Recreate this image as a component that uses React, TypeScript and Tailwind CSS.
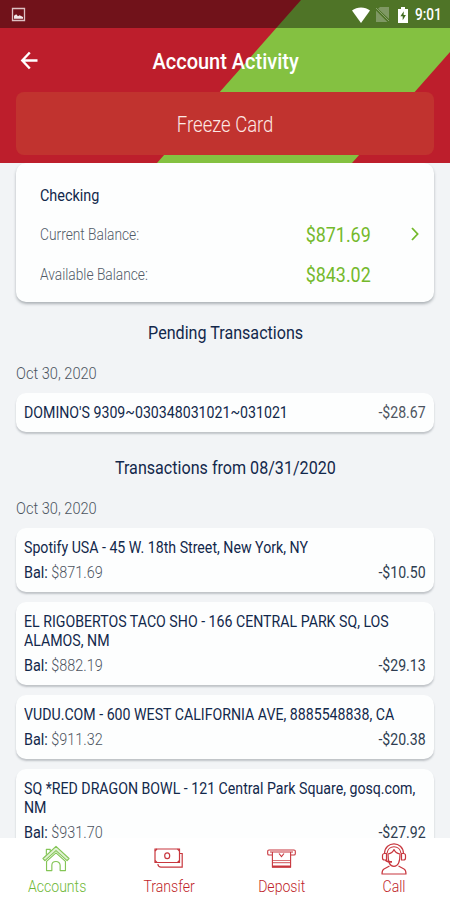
import type { ReactNode } from "react";

type Transaction = {
  description: string;
  amount: string;
  balance: string;
};

const TRANSACTIONS: Transaction[] = [
  { description: "Spotify USA - 45 W. 18th Street, New York, NY", amount: "-$10.50", balance: "$871.69" },
  { description: "EL RIGOBERTOS TACO SHO - 166 CENTRAL PARK SQ, LOS ALAMOS, NM", amount: "-$29.13", balance: "$882.19" },
  { description: "VUDU.COM - 600 WEST CALIFORNIA AVE, 8885548838, CA", amount: "-$20.38", balance: "$911.32" },
  { description: "SQ *RED DRAGON BOWL - 121 Central Park Square, gosq.com, NM", amount: "-$27.92", balance: "$931.70" },
];

function StatusBar() {
  return (
    <div className="flex h-7 items-center bg-black/40 pl-[11px] pr-2 pt-px text-white">
      <svg width="15" height="15" viewBox="0 0 15 15" className="opacity-90">
        <path d="M1.5 1.5h12v12h-12z" fill="none" stroke="#e9d3d5" strokeWidth="1.3" />
        <path d="M3 11.8V8.800l2.200-1.600L7 9.300l1.600-1L12 10v1.800z" fill="#fff" />
      </svg>
      <svg width="18" height="16" viewBox="0 0 18 16" className="ml-auto">
        <path d="M0 3.600C5-.6 13-.6 18 3.600L9 16z" fill="#fff" />
      </svg>
      <svg width="13" height="15" viewBox="0 0 13 15" className="ml-[6px] opacity-40">
        <path d="M4 0h9v12L2 1.800zM0 3.600V15h11.400z" fill="#c7cfc0" />
        <path d="M0 1l13 13" stroke="#dfe5da" strokeWidth="1" />
      </svg>
      <svg width="10" height="16" viewBox="0 0 10 16" className="ml-[9px]">
        <path d="M3 0h4v2h3v14H0V2h3z" fill="#fff" />
        <path d="M5.800 4.200L2.400 9.300h2.300v4l3.200-5.200H5.600z" fill="#3f6a1f" />
      </svg>
      <span className="ml-[7px] inline-block w-[27px] text-[16px] font-medium leading-none">
        <span className="inline-block origin-left scale-x-[0.85]">9:01</span>
      </span>
    </div>
  );
}

function Header() {
  return (
    <header className="relative h-[163px] shrink-0 bg-[#bd1e2c]">
      <svg className="absolute inset-0" width="450" height="163" viewBox="0 0 450 163">
        <path d="M301 0H450V52L352 163H157z" fill="#84c141" />
      </svg>
      <div className="relative">
        <StatusBar />
        <div className="flex h-16 items-center pl-5">
          <svg width="18" height="19" viewBox="0 0 18 19" fill="none" stroke="#fff" strokeWidth="2.4">
            <path d="M17.500 9.500H2.500M9.800 1.500L2.300 9.500l7.500 8" />
          </svg>
          <h1 className="flex-1 pr-[36px] pt-[3px] text-center text-[21.5px] font-medium leading-none text-white">
            <span className="inline-block scale-x-[0.93]">Account Activity</span>
          </h1>
        </div>
        <button
          type="button"
          className="mx-4 flex h-[63px] w-[418px] items-center justify-center rounded-lg bg-[#c1332f] pl-px pt-[3px] text-[21.5px] font-light text-[#fde8e4]"
        >
          <span className="inline-block scale-x-[0.86]">Freeze Card</span>
        </button>
      </div>
    </header>
  );
}

function BalanceRow({ label, value }: { label: string; value: string }) {
  return (
    <div className="flex h-10 items-center justify-between">
      <span className="inline-block origin-left scale-x-[0.86] text-[16px] font-light text-[#515b68]">{label}</span>
      <span className="inline-block origin-right scale-x-[0.895] text-[20px] text-[#74b92b]">{value}</span>
    </div>
  );
}

function SectionTitle({ children }: { children: ReactNode }) {
  return (
    <h2 className="h-6 pl-px text-center text-[18px] leading-6 text-[#12284b]">
      <span className="inline-block scale-x-[0.895]">{children}</span>
    </h2>
  );
}

function DateLabel({ children }: { children: ReactNode }) {
  return (
    <div className="h-6 text-[17px] font-light leading-6 text-[#4c545f]">
      <span className="inline-block origin-left scale-x-[0.86]">{children}</span>
    </div>
  );
}

function Card({ children, className }: { children: ReactNode; className: string }) {
  return (
    <div className={`rounded-[10px] bg-[#fdfefe] shadow-[0_2px_2px_rgba(60,70,80,0.28)] ${className}`}>{children}</div>
  );
}

function TransactionCard({ description, amount, balance }: Transaction) {
  return (
    <Card className="mb-[10px] px-2 pb-[9px] pt-[10px]">
      <p className="w-[113%] origin-left scale-x-[0.885] text-[16px] leading-[19px] text-[#12284b]">{description}</p>
      <div className="mt-[6px] flex justify-between text-[16px] leading-5">
        <span className="inline-block origin-left scale-x-[0.9] font-light text-[#4c545f]">
          <span className="font-normal text-[#12284b]">Bal:</span> {balance}
        </span>
        <span className="inline-block origin-right scale-x-[0.88] text-[#2e3d50]">{amount}</span>
      </div>
    </Card>
  );
}

function HouseIcon() {
  return (
    <svg width="28" height="27" viewBox="0 0 29 28" fill="none" stroke="#84c556" strokeWidth="1.2" strokeLinejoin="round">
      <path d="M1 14L14.500 1.500 28 14l-2 2.200L14.500 5.800 3 16.200z" fill="#e2f2d5" />
      <path d="M4.700 17v9.500h5.500v-5.500c0-5.200 8.600-5.200 8.600 0v5.500h5.500V17L14.500 8.200z" />
      <path d="M4.500 10V4.500h4v2" />
    </svg>
  );
}

function CashIcon() {
  return (
    <svg width="29" height="21" viewBox="0 0 29 21" fill="none" stroke="#c8373e" strokeWidth="1.2">
      <path d="M1 1h24.500v13.500H1z" />
      <ellipse cx="13.200" cy="7.800" rx="2.500" ry="2.900" />
      <path d="M26 5.500h2.200v13.700H7c-1.800 0-2.800-.8-3.200-3" />
      <path d="M1 3L3 1M23.500 1l2 2M1 12.500l2 2M23.500 14.500l2-2" />
    </svg>
  );
}

function DepositIcon() {
  return (
    <svg width="29" height="20" viewBox="0 0 29 20" fill="none" stroke="#c8373e" strokeWidth="1.1">
      <path d="M5 6H2A1.300 1.300 0 0 1 .7 4.700V2.400A1.300 1.300 0 0 1 2 1h25a1.300 1.300 0 0 1 1.300 1.400v2.300A1.300 1.300 0 0 1 27 6h-3" />
      <path d="M3 3h23M5.400 3v15h18.200V3M12 4.500l2.500 3.200L17 4.500" />
      <path d="M5.400 11.500h18.200M5.400 13.600h18.200" strokeOpacity="0.7" />
      <path d="M5 17.600h19" strokeWidth="2.2" />
    </svg>
  );
}

function AgentIcon() {
  return (
    <svg width="26" height="32" viewBox="0 0 26 32" fill="none" stroke="#c8373e" strokeWidth="1.2" strokeLinejoin="round">
      <path d="M3.500 10.500C4-2.300 22-2.300 22.500 10.500" />
      <path d="M6 10.500C7 1.500 19 1.500 20 10.500" />
      <path d="M5.500 10.500h-2a2 2 0 0 0-2 2v2.500a2 2 0 0 0 2 2h2zM20.500 10.500h2a2 2 0 0 1 2 2v2.500a2 2 0 0 1-2 2h-2z" />
      <path d="M7 11c0 7 1 12.300 6 12.300s6-5.300 6-12.300c-2.500-.5-5-2-6-4.500-1 2.500-3.500 4-6 4.500z" />
      <path d="M4.500 17c1 1.700 3.500 1.900 6.500 1.900" strokeWidth="1.6" />
      <path d="M8.500 23L3 26c-1.500.8-2 2.300-2 5h24c0-2.700-.5-4.200-2-5l-5.500-3" />
    </svg>
  );
}

function Tab({ label, icon, active }: { label: string; icon: ReactNode; active?: boolean }) {
  return (
    <button type="button" className="flex flex-1 flex-col items-center">
      <span className="flex h-[41px] items-center justify-center">{icon}</span>
      <span
        className={`inline-block scale-x-[0.88] pl-px text-[16px] font-light leading-[15px] ${active ? "text-[#6fb838]" : "text-[#c01f2a]"}`}
      >
        {label}
      </span>
    </button>
  );
}

export default function App() {
  return (
    <div className="flex h-[900px] w-[450px] flex-col overflow-hidden bg-[#f2f4f6] font-['Roboto',sans-serif]">
      <Header />
      <main className="min-h-0 flex-1 overflow-hidden px-4">
        {/* Account summary */}
        <div className="flex h-[139px] flex-col rounded-[10px] bg-[#fdfefe] pl-6 pt-[23px] shadow-[0_2px_3px_rgba(60,70,80,0.38)]">
          <div className="h-[20px] text-[16px] leading-[20px] text-[#12284b]">
            <span className="inline-block origin-left scale-x-[0.9]">Checking</span>
          </div>
          <div className="mt-[9px] flex">
            <div className="w-[331px]">
              <BalanceRow label="Current Balance:" value="$871.69" />
              <BalanceRow label="Available Balance:" value="$843.02" />
            </div>
            <svg width="8" height="14" viewBox="0 0 8 14" fill="none" className="ml-10 mt-3">
              <path d="M1 1l5.600 6L1 13" stroke="#74b92b" strokeWidth="1.8" />
            </svg>
          </div>
        </div>

        <div className="h-[19px]" />
        <SectionTitle>Pending Transactions</SectionTitle>
        <div className="h-4" />
        <DateLabel>Oct 30, 2020</DateLabel>
        <Card className="mt-2 flex h-[39px] items-center justify-between px-2 pt-px">
          <span className="inline-block origin-left scale-x-[0.885] text-[16px] text-[#12284b]">
            DOMINO'S 9309~030348031021~031021
          </span>
          <span className="inline-block origin-right scale-x-[0.88] text-[16px] text-[#4c545f]">-$28.67</span>
        </Card>

        <div className="h-[24px]" />
        <SectionTitle>Transactions from 08/31/2020</SectionTitle>
        <div className="h-4" />
        <DateLabel>Oct 30, 2020</DateLabel>
        <div className="h-2" />
        {TRANSACTIONS.map((t) => (
          <TransactionCard key={t.description} {...t} />
        ))}
      </main>
      <nav className="flex h-[62px] shrink-0 bg-white">
        <Tab label="Accounts" icon={<HouseIcon />} active />
        <Tab label="Transfer" icon={<CashIcon />} />
        <Tab label="Deposit" icon={<DepositIcon />} />
        <Tab label="Call" icon={<AgentIcon />} />
      </nav>
    </div>
  );
}
